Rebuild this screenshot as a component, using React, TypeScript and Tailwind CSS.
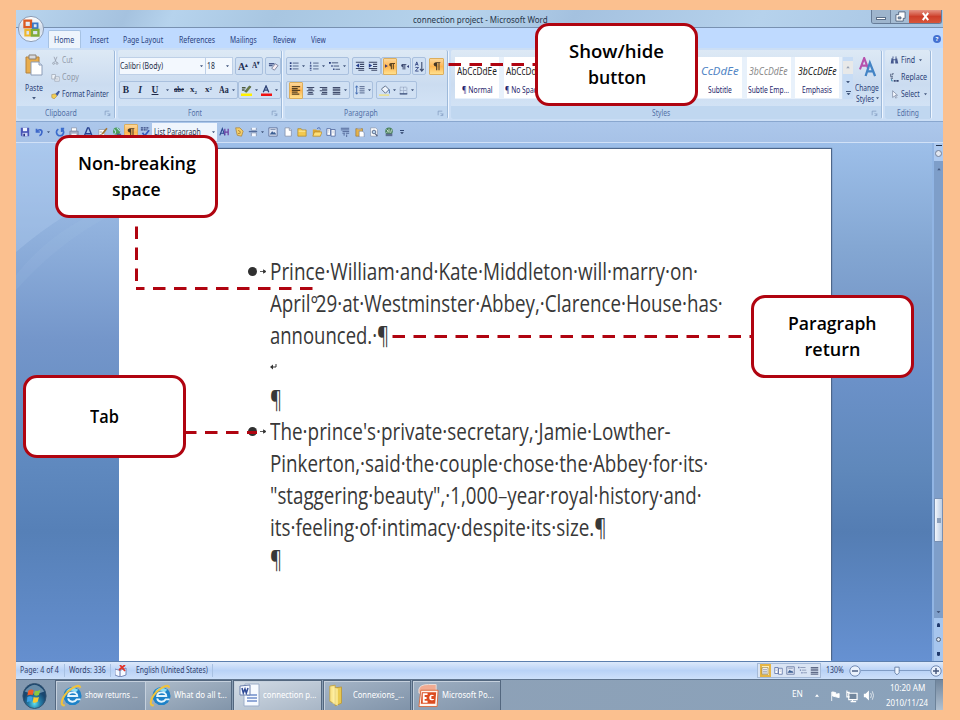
import React, { useLayoutEffect, useRef, useState } from 'react';

/* Text squeezed horizontally to an exact measure, like a condensed UI face. */
function Fit({ w, className = '', children }: { w: number; className?: string; children: React.ReactNode }) {
  const ref = useRef<HTMLSpanElement>(null);
  const [scale, setScale] = useState(1);
  useLayoutEffect(() => {
    if (ref.current) setScale(w / ref.current.offsetWidth);
  }, [w]);
  return (
    <span className={'inline-flex shrink-0 whitespace-pre ' + className} style={{ width: w }}>
      <span ref={ref} className="inline-block shrink-0 origin-left" style={{ transform: `scaleX(${scale})` }}>
        {children}
      </span>
    </span>
  );
}

const S = '#3d4f78';

const glyphs: Record<string, React.ReactNode> = {
  save: (<><path d="M1 1h10v10H2L1 10z" fill="#4a55b8" /><path d="M3.500 1h5v4h-5z" fill="#eef2ff" /><path d="M3 7h6v4H3z" fill="#cdd5f4" /><path d="M4 8h2v3H4z" fill="#2c3580" /></>),
  undo: (<path d="M3 2v4h4M3.500 5.500C6 2 10 3 9.500 6.500 9.300 8.500 8 10 6.500 10.500" fill="none" stroke="#3d67c9" strokeWidth="2" />),
  redo: (<path d="M4 2.500C0 5 2 10.500 6 10.500s6-5 2.500-8M8 6V2h3" fill="none" stroke="#3b6ccc" strokeWidth="2" />),
  print: (<><path d="M3 1h6v4H3z" fill="#fff" stroke="#7d8598" strokeWidth=".7" /><path d="M1 5h10v5H1z" fill="#a6afc4" stroke="#69758f" strokeWidth=".7" /><path d="M3 8h6v3H3z" fill="#f4f6fa" /></>),
  styleA: (<path d="M1.500 11L5.500 1h1.500l4 10M3.500 8h5.500" fill="none" stroke="#27408f" strokeWidth="1.700" />),
  edit: (<><path d="M1 3h7v8H1z" fill="#fff" stroke="#7e8799" strokeWidth=".7" /><path d="M4 8L10 1l1.500 1L6 9z" fill="#a4742f" /><path d="M2 6h3M2 9h3" stroke="#777" strokeWidth=".8" /></>),
  globe: (<><circle cx="5.500" cy="5" r="4.300" fill="#4c9c5c" /><path d="M2 3c3 1 3 4 1 5M6 1c1 2 3 2 3 4" stroke="#b7def0" fill="none" strokeWidth="1.300" /><path d="M6 8h5v3H6z" fill="#505b9a" /></>),
  spell: (<><path d="M1 1h10M1 3.500h8" stroke="#34457f" strokeWidth="1.500" strokeDasharray="2.500 .8" /><path d="M3 7l2.500 3.500L11 4" fill="none" stroke="#3658b9" strokeWidth="2" /></>),
  pilcrow: (<path d="M10 1.500H5C1 1.500 1 6.500 5 6.500V11h1.300V2.500h1.500V11H9V2.500h1z" fill="#463624" />),
  aa: (<><path d="M1 10L4 2l3 8M2 7.500h4" fill="none" stroke="#28448f" strokeWidth="1.300" /><path d="M7 2v8M11 2v8M7 6h4" stroke="#6c3fa2" strokeWidth="1.500" /></>),
  scroll: (<><path d="M2 1h5l4 4-2 6-5-1-1-4z" fill="#f4cf6b" stroke="#a47a2e" strokeWidth=".8" /><path d="M5 4l3 2M5 8l3-1" stroke="#9a6e29" /></>),
  rows: (<><path d="M1 5.500h10" stroke="#536c9c" strokeWidth="1.500" /><path d="M4 1v3h6V1M4 11V7h6v4" fill="#f4f8ff" stroke="#8292b0" /></>),
  pic: (<><path d="M1 1h10v10H1z" fill="#dfe6f4" stroke="#5c6f99" /><path d="M2 9l3-4 2 2 1-1 2 3z" fill="#3c5f93" /><path d="M3 3h6" stroke="#7688aa" /></>),
  page: (<><path d="M2.500 1h5L10 3.500V11H2.500z" fill="#fff" stroke="#75829b" strokeWidth=".8" /><path d="M7.500 1v3H10" fill="#d5ddeb" stroke="#75829b" strokeWidth=".8" /></>),
  folder: (<><path d="M1 2h4l1 1.500h5V11H1z" fill="#f2c94f" stroke="#ab8327" strokeWidth=".8" /><path d="M2 5h8" stroke="#fff1b0" /></>),
  open: (<><path d="M1 3h4l1 1h4v7H1z" fill="#dca632" /><path d="M3 6h9l-2 5H1z" fill="#ffdf76" stroke="#a87c22" strokeWidth=".7" /><path d="M6 2c2-2 4-1 4 1" fill="none" stroke="#405fa8" /></>),
  book: (<><path d="M1 2h4.500v8H1zM6 3h5v8H6z" fill="#fff" stroke="#536aa0" /><path d="M2 4h2M2 6h2M7.500 5h2M7.500 7h2" stroke="#9ba8c5" strokeWidth=".7" /></>),
  toc: (<path d="M1 1.500h10M1 3.500h10M3 5.500h8M3 7.500h3M7 7.500h4M4 9.500h2M8 9v3" stroke="#45598b" strokeWidth="1" />),
  layout: (<><path d="M1.500 1h9v10h-9z" fill="#fff" stroke="#8a7440" /><path d="M3 4h6M3 6.500h6M3 9h6" stroke="#6f7690" /></>),
  paste: (<><path d="M1 2h8v9H1z" fill="#e5b249" stroke="#93702e" strokeWidth=".7" /><path d="M3 1h4v2H3z" fill="#a2aac0" /><path d="M5 5h4l2 2v5H5z" fill="#fff" stroke="#63769d" strokeWidth=".7" /></>),
  preview: (<><path d="M2 1h6l2 2v8H2z" fill="#fff" stroke="#75829b" strokeWidth=".7" /><circle cx="6" cy="6" r="2.200" fill="#b9d4ee" stroke="#4a5b7d" /><path d="M7.500 8L10 11" stroke="#4a5b7d" strokeWidth="1.400" /></>),
  find: (<><path d="M2 3h2.500l.5 7H1zM7 3h2.500L11 10H7z" fill="#46598f" /><path d="M4 5h4M3 1.500h2M7 1.500h2" stroke="#46598f" strokeWidth="1.300" /></>),
  green: (<><circle cx="6" cy="5" r="4.500" fill="#4a815c" /><path d="M3 3l2 2-2 2M6 2v5M9 3L8 7" stroke="#e2f1e3" fill="none" /><path d="M2 8h8v3H2z" fill="#5e6e92" /></>),
  bullets: (<><path d="M4.500 2.500h7M4.500 6h7M4.500 9.500h7" stroke={S} strokeWidth="1" /><path d="M1 2.500h2M1 6h2M1 9.500h2" stroke="#26397a" strokeWidth="2" /></>),
  numbers: (<><path d="M5 2.500h6.500M5 6h6.500M5 9.500h6.500" stroke={S} strokeWidth="1" /><path d="M2 1v3M1 5.500h2M1 7h2M1 9h2M1 11h2" stroke="#26397a" /></>),
  multi: (<><path d="M3 2h7M5 5.500h6M7 9h5" stroke={S} strokeWidth="1" /><path d="M0 2h2M2.500 5.500h1.500M4.500 9H6" stroke="#26397a" strokeWidth="1.800" /></>),
  outdent: (<><path d="M1 1.500h10M6 4h5M6 6.500h5M1 9h10M4 11h7" stroke="#3b4665" strokeWidth="1.300" /><path d="M5 3v5L1 5.500z" fill="#273f8e" /></>),
  indent: (<><path d="M1 1.500h10M6 4h5M6 6.500h5M1 9h10M4 11h7" stroke="#3b4665" strokeWidth="1.300" /><path d="M1 3v5l4-2.500z" fill="#273f8e" /></>),
  ltr: (<><path d="M0 4v4l3.500-2z" fill="#473e72" /><path d="M12 2.500H7C4.500 2.500 4.500 6.500 7 6.500V10h1.300V3.500h1V10h1.300V3.500H12z" fill="#5c4420" /></>),
  rtl: (<><path d="M12 4v4L9 6z" fill="#333f78" /><path d="M8.500 2.500H3.500C1 2.500 1 6.500 3.500 6.500V10h1.300V3.500h1V10h1.300V3.500h1.400z" fill="#39466e" /></>),
  sort: (<><path d="M1.500 5L3 1l1.500 4M2 3.800h2M1.500 7H5l-3.500 4H5" fill="none" stroke="#344683" strokeWidth="1" /><path d="M8.500 1v9M6.500 8.500l2 2.500 2-2.500" fill="none" stroke="#3f4e72" strokeWidth="1.200" /></>),
  left: (<path d="M1 2h10M1 4.200h7M1 6.400h10M1 8.600h7M1 10.800h9" stroke="#574121" strokeWidth="1.500" />),
  center: (<path d="M1 2h10M3 4.200h6M1 6.400h10M3 8.600h6M2 10.800h8" stroke="#414c6c" strokeWidth="1.500" />),
  right: (<path d="M1 2h10M4 4.200h7M1 6.400h10M4 8.600h7M3 10.800h8" stroke="#414c6c" strokeWidth="1.500" />),
  just: (<path d="M1 2h10M1 4.200h10M1 6.400h10M1 8.600h10M1 10.800h10" stroke="#414c6c" strokeWidth="1.500" />),
  spacing: (<><path d="M5.500 2h6M5.500 4.500h6M5.500 7h6M5.500 9.500h6" stroke={S} /><path d="M2 1v10M.5 3L2 1l1.500 2M.5 9L2 11l1.500-2" fill="none" stroke="#3761ac" /></>),
  fill: (<><path d="M3 4l4-3 4 4-4 4-4-4z" fill="#edf3fb" stroke="#5c6b85" /><path d="M10 5c2 1 2 3 1 4" stroke="#5985ba" fill="none" strokeWidth="1.300" /><path d="M0 10h11v2H0z" fill="#e8e19a" /></>),
  borders: (<><path d="M1.500 1.500h9v9h-9zM6 1.500v9M1.500 6h9" fill="none" stroke="#8392b0" strokeDasharray="1 .7" /><path d="M1 10.500h10" stroke="#384c79" strokeWidth="1.400" /></>),
  eraser: (<><path d="M1 3h6M1 5h4" stroke="#4b5b8c" strokeWidth="1.500" /><path d="M4 8l4-5 3 2-4 5z" fill="#f7eef4" stroke="#616b8b" strokeWidth=".8" /></>),
  hilite: (<><path d="M1 3h4M1 5.500h3" stroke="#4c5940" strokeWidth="1.500" /><path d="M4 7l5-6 2 1-5 6z" fill="#6a7d3c" stroke="#42502c" strokeWidth=".6" /><path d="M0 9.300h12V12H0z" fill="#fff000" /></>),
  fontA: (<><path d="M2.500 8L5.500 1 8.500 8M3.500 5.500h4" fill="none" stroke="#2e4276" strokeWidth="1.400" /><path d="M0 9.300h12V12H0z" fill="#f01212" /></>),
  cut: (<path d="M4 1l3 7M8 1L5 8M3.500 8.500a1.300 1.300 0 100 2.600 1.300 1.300 0 000-2.600M8 8.500a1.300 1.300 0 100 2.600A1.300 1.300 0 008 8.500" fill="none" stroke="#969fae" strokeWidth="1.100" />),
  copy: (<><path d="M1 2h5v6H1zM5 5h6v6H5z" fill="#edf2f8" stroke="#a0a9b7" /><path d="M6.500 7.500h3M6.500 9h3" stroke="#b5becb" strokeWidth=".8" /></>),
  brush: (<><path d="M1 6l5-1 2 3-4 4-3-2z" fill="#f1cd54" stroke="#9a752a" strokeWidth=".6" /><path d="M6 5l4-4 2 1-3.500 6z" fill="#3e589f" /></>),
  replace: (<><path d="M1 1v4h3M5 1H3v2M1 7h3" fill="none" stroke="#52627f" strokeWidth="1.300" /><path d="M5 10.500h7" stroke="#34436e" strokeWidth="2.500" strokeDasharray="1.600 .5" /><path d="M2 8v2.500h2" fill="none" stroke="#2e7ca4" /></>),
  select: (<path d="M3.500 1v9L6 8l2 3 1-1-2-3h3z" fill="#f7faff" stroke="#65728e" strokeWidth=".8" />),
  launch: (<path d="M2 2h7M2 2v7M6 5l4 4V5.500M10 9.500H6" fill="none" stroke="#7791b8" strokeWidth="1.100" />),
  proof: (<><path d="M0 4l5 1.500L11 3v7l-6 2-5-2z" fill="#f6f9ff" stroke="#5e74aa" strokeWidth=".8" /><path d="M5 5.500V12" stroke="#5e74aa" /><path d="M5 0l5 6M10 0L4 5" stroke="#e23329" strokeWidth="1.800" /></>),
};

const Ico = ({ n, className = 'size-[11px]' }: { n: string; className?: string }) => (
  <svg viewBox="0 0 12 12" className={'shrink-0 ' + className}>{glyphs[n]}</svg>
);
const Down = ({ className = 'w-[4px]' }: { className?: string }) => (
  <svg viewBox="0 0 6 4" className={'h-[2.5px] shrink-0 ' + className}><path d="M0 0h6L3 4z" fill="#44597f" /></svg>
);
const Box = ({ className, children }: { className: string; children: React.ReactNode }) => (
  <div className={'flex h-[18px] shrink-0 items-center justify-around rounded-[2px] border border-[#a9c0de] bg-[#d0e0f3] ' + className}>{children}</div>
);
const Hot = ({ n, className = 'w-[14px]' }: { n: string; className?: string }) => (
  <span className={'flex h-[17px] shrink-0 items-center justify-center rounded-[1px] border border-[#dcae5c] bg-gradient-to-b from-[#fcd799] via-[#ffb54f] to-[#ffe08d] ' + className}>
    <Ico n={n} className="size-[10px]" />
  </span>
);

function Group({ title, w, className, launch = true, children }: { title: string; w: number; className: string; launch?: boolean; children: React.ReactNode }) {
  return (
    <section className={'flex h-[69px] shrink-0 flex-col overflow-hidden rounded-[2px] border-r border-[#9db9da] bg-gradient-to-b from-[#dde9f5] via-[#cbdcf0] to-[#d6e6f8] shadow-[1px_0_0_#eff6ff] ' + className}>
      <div className="h-[56px] shrink-0">{children}</div>
      <div className="flex h-[13px] items-center bg-[#c0d7f0] pt-[2px] text-[8.500px] leading-none text-[#5270a6]">
        <div className="flex flex-1 justify-center"><Fit w={w}>{title}</Fit></div>
        {launch && <Ico n="launch" className="mr-[3px] size-[7px]" />}
      </div>
    </section>
  );
}

function StyleCard({ sample, name, nameW, className = '', sampleW = 40 }: { sample: string; name: string; nameW: number; className?: string; sampleW?: number }) {
  return (
    <div className="flex h-[41px] w-[44px] shrink-0 flex-col items-center overflow-hidden bg-white">
      <Fit w={sampleW} className={'mt-[7px] h-[15px] text-[10.500px] leading-[15px] ' + className}>{sample}</Fit>
      <Fit w={nameW} className="mt-[5px] text-[8px] leading-[11px] text-[#24246a]">{name}</Fit>
    </div>
  );
}

function Ribbon() {
  return (
    <div className="flex h-[74px] shrink-0 gap-[3px] border-b border-[#89a7cf] bg-[#cbdef5] px-[1px] pt-[2px] text-[8.500px] text-[#2b3f78]">
      <Group title="Clipboard" w={32} className="w-[98px]">
        <div className="flex h-full pl-[8px] pt-[2px]">
          <div className="flex w-[18px] flex-col items-center">
            <svg viewBox="0 0 18 22" className="mt-[2px] h-[22px] w-[18px]">
              <path d="M1 3h13v16H1z" fill="#e8ad4d" stroke="#b5823c" /><path d="M4 1h7v4H4z" fill="#d8dbe0" stroke="#8b8172" />
              <path d="M6 8h8l3 3v10H6z" fill="#fff" stroke="#8c9db8" /><path d="M14 8v3h3" fill="#d6e4f2" stroke="#8c9db8" />
            </svg>
            <Fit w={18} className="mt-[6px] leading-[12px]">Paste</Fit>
            <Down className="mt-[3px] w-[4px]" />
          </div>
          <div className="ml-[8px] flex flex-col text-[#929aa8]">
            <div className="flex h-[16px] items-center gap-[2px]"><Ico n="cut" className="size-[9px]" /><Fit w={11}>Cut</Fit></div>
            <div className="flex h-[18px] items-center gap-[2px]"><Ico n="copy" className="size-[9px]" /><Fit w={17}>Copy</Fit></div>
            <div className="flex h-[17px] items-center gap-[2px] text-[#2b3f78]"><Ico n="brush" className="size-[9px]" /><Fit w={47}>Format Painter</Fit></div>
          </div>
        </div>
      </Group>

      <Group title="Font" w={14} className="w-[164px]">
        <div className="flex flex-col gap-[6px] pl-[1px] pt-[7px]">
          <div className="flex items-center">
            <div className="flex h-[18px] w-[87px] items-center justify-between border border-[#bed0e7] bg-[#f3f8fe] pr-[2px] text-[#222c46]"><Fit w={43}>Calibri (Body)</Fit><Down className="w-[3px]" /></div>
            <div className="flex h-[18px] w-[27px] items-center justify-between border border-l-0 border-[#bed0e7] bg-[#f3f8fe] pl-[1px] pr-[3px] text-[#222c46]"><Fit w={8}>18</Fit><Down className="w-[3px]" /></div>
            <Box className="ml-[2px] w-[28px] font-['Liberation_Serif'] font-bold text-[#263154]"><Fit w={10} className="text-[11px]">A<sup className="text-[6px]">▴</sup></Fit><Fit w={8} className="text-[9px]">A<sup className="text-[6px]">▾</sup></Fit></Box>
            <Box className="ml-[2px] w-[16px]"><Ico n="eraser" /></Box>
          </div>
          <div className="flex items-center">
            <div className="flex h-[18px] w-[119px] shrink-0 items-center rounded-[2px] border border-[#a9c0de] bg-[#d0e0f3] text-center font-['Liberation_Serif'] text-[9.500px] font-bold text-[#202a49]">
              <span className="w-[12px]">B</span><span className="w-[16px] italic">I</span><span className="w-[14px] underline">U</span>
              <span className="flex w-[10px] justify-center"><Down className="w-[3px]" /></span>
              <Fit w={10} className="ml-[2px] text-[8px] line-through">abc</Fit>
              <Fit w={7} className="ml-[6px] text-[9px]">x<sub className="text-[5px]">2</sub></Fit>
              <Fit w={7} className="ml-[8px] text-[9px]">x<sup className="text-[5px]">2</sup></Fit>
              <Fit w={10} className="ml-[7px]">Aa</Fit><Down className="ml-[3px] w-[3px]" />
            </div>
            <Box className="w-[43px]"><Ico n="hilite" /><Down className="w-[3px]" /><Ico n="fontA" /><Down className="w-[3px]" /></Box>
          </div>
        </div>
      </Group>

      <Group title="Paragraph" w={34} className="w-[163px]">
        <div className="flex flex-col gap-[6px] pl-[1px] pt-[7px]">
          <div className="flex items-center">
            <Box className="w-[63px]"><Ico n="bullets" className="size-[10px]" /><Down className="w-[3px]" /><Ico n="numbers" className="size-[10px]" /><Down className="w-[3px]" /><Ico n="multi" className="size-[11px]" /><Down className="w-[3px]" /></Box>
            <Box className="ml-[3px] w-[29px]"><Ico n="outdent" className="size-[10px]" /><Ico n="indent" className="size-[10px]" /></Box>
            <Box className="w-[30px]"><Hot n="ltr" /><Ico n="rtl" className="size-[9px]" /></Box>
            <Box className="ml-[1px] w-[14px]"><Ico n="sort" /></Box>
            <Hot n="pilcrow" className="ml-[3px] w-[15px]" />
          </div>
          <div className="flex items-center">
            <Box className="w-[64px]"><Hot n="left" className="w-[14px]" /><Ico n="center" className="size-[9px]" /><Ico n="right" className="size-[9px]" /><Ico n="just" className="size-[9px]" /><Down className="w-[3px]" /></Box>
            <Box className="ml-[3px] w-[20px]"><Ico n="spacing" className="size-[10px]" /><Down className="w-[3px]" /></Box>
            <Box className="ml-[3px] w-[41px]"><Ico n="fill" /><Down className="w-[3px]" /><Ico n="borders" className="size-[9px]" /><Down className="w-[3px]" /></Box>
          </div>
        </div>
      </Group>

      <Group title="Styles" w={18} className="w-[431px]">
        <div className="flex pl-[4px] pt-[7px]">
          <div className="flex h-[42px] w-[387px] gap-[4.600px] overflow-hidden bg-[#e8f1fb]">
            <StyleCard sample="AbCcDdEe" name="¶ Normal" nameW={31} className="text-[#222]" />
            <StyleCard sample="AbCcDdEe" name="¶ No Spacing" nameW={42} className="text-[#222]" />
            <div className="w-[141.200px] shrink-0 bg-white" />
            <StyleCard sample="CcDdEe" name="Subtitle" nameW={24} className="font-['Noto_Sans'] text-[#5285c5] italic" sampleW={38} />
            <StyleCard sample="3bCcDdEe" name="Subtle Emp..." nameW={41} className="text-[#8b8b8b] italic" sampleW={39} />
            <StyleCard sample="3bCcDdEe" name="Emphasis" nameW={30} className="text-[#222] italic" sampleW={39} />
          </div>
          <div className="ml-[1px] flex h-[42px] w-[10px] flex-col items-center justify-around bg-[#c7dcf5]">
            <div className="flex h-[13px] w-full items-center justify-center bg-[#e8e9e9]"><Down className="w-[4px] rotate-180 opacity-50" /></div>
            <Down /><span className="flex flex-col items-center gap-px"><span className="h-px w-[5px] bg-[#44597f]" /><Down className="w-[5px]" /></span>
          </div>
          <div className="ml-[1px] flex w-[26px] flex-col items-center">
            <svg viewBox="0 0 18 22" className="h-[21px] w-[17px]"><path d="M1 13L5.500 1 10 13M3 9h5" fill="none" stroke="#b652ad" strokeWidth="2.200" /><path d="M7 20l4.500-14L17 20M9 15h6" fill="none" stroke="#4384c5" strokeWidth="2.400" /></svg>
            <Fit w={24} className="mt-[4px] leading-[11px]">Change</Fit>
            <span className="flex items-center gap-[2px]"><Fit w={18} className="leading-[11px]">Styles</Fit><Down className="w-[3px]" /></span>
          </div>
        </div>
      </Group>

      <Group title="Editing" w={22} className="w-[46px]" launch={false}>
        <div className="flex flex-col pl-[5px] pt-[2px]">
          <div className="flex h-[17px] items-center gap-[2px]"><Ico n="find" className="size-[9px]" /><Fit w={14}>Find</Fit><Down className="ml-[2px] w-[3px]" /></div>
          <div className="flex h-[17px] items-center gap-[2px]"><Ico n="replace" className="size-[9px]" /><Fit w={26}>Replace</Fit></div>
          <div className="flex h-[17px] items-center gap-[2px]"><Ico n="select" className="size-[9px]" /><Fit w={19}>Select</Fit><Down className="ml-[2px] w-[3px]" /></div>
        </div>
      </Group>
    </div>
  );
}

const Q = ({ n, className = 'w-[14.400px]' }: { n: string; className?: string }) => (
  <span className={'flex shrink-0 justify-center ' + className}><Ico n={n} className="size-[10px]" /></span>
);

function QuickBar() {
  return (
    <div className="flex h-[21px] shrink-0 items-center border-b border-[#d1e1f7] bg-gradient-to-b from-[#acc7eb] to-[#a7c2e7] pl-[2px]">
      <Q n="save" /><Q n="undo" className="w-[13px]" /><span className="flex w-[7px] justify-center"><Down className="w-[3px]" /></span>
      <Q n="redo" /><Q n="print" /><Q n="styleA" /><Q n="edit" /><Q n="globe" className="w-[14px]" />
      <Hot n="pilcrow" className="w-[14px]" /><Q n="spell" className="w-[14px]" />
      <div className="flex h-[18px] w-[65px] items-center justify-between bg-[#eff5fd] pl-[2px] pr-[2px] text-[8.500px] text-[#29334d]"><Fit w={47}>List Paragraph</Fit><Down className="w-[3px]" /></div>
      <Q n="aa" /><Q n="scroll" /><Q n="rows" className="w-[15px]" /><span className="flex w-[4px]"><Down className="w-[3px]" /></span>
      <Q n="pic" className="w-[16px]" /><Q n="page" /><Q n="folder" /><Q n="open" /><Q n="book" /><Q n="toc" /><Q n="paste" /><Q n="preview" /><Q n="green" />
      <span className="ml-[4px] flex flex-col items-center gap-px"><span className="h-px w-[4px] bg-[#334a76]" /><Down /></span>
    </div>
  );
}

function Line({ w, children }: { w: number; children: React.ReactNode }) {
  return <div className="flex h-[32px] items-center"><Fit w={w} className="leading-[32px]">{children}</Fit></div>;
}
function Bullet() {
  return (
    <span className="-ml-[22px] flex w-[22px] shrink-0 items-center">
      <span className="h-[9px] w-[9px] rounded-full bg-[#303030]" />
      <svg viewBox="0 0 6 5" className="ml-[3px] h-[5px] w-[6px]"><path d="M0 2.500h4M3.500.8L6 2.500 3.500 4.200z" stroke="#333" strokeWidth=".8" fill="#333" /></svg>
    </span>
  );
}

function Document() {
  return (
    <div className="flex h-[518px] shrink-0 bg-[#9cbee9]">
      <div className="relative w-[103px] shrink-0 overflow-hidden bg-[linear-gradient(to_bottom,#a6c5ec_0%,#8fb0dc_18%,#7496ca_38%,#5f89bf_62%,#5680b7_75%,#658fcf_100%)]">
        <svg viewBox="0 0 103 518" className="size-full">
          <path d="M0 0h103v46Q50 66 0 109z" fill="#b5d0f1" opacity=".3" />
          <path d="M0 132Q40 82 103 60v8Q45 96 0 147z" fill="#b9d3f2" opacity=".08" />
        </svg>
      </div>
      <main className="relative mt-[6px] w-[712px] shrink-0 bg-white pl-[151px] pt-[106px] font-['Open_Sans'] text-[23px] text-[#383838] shadow-[1px_-1px_1px_#4d668a]">
        <div className="flex items-center"><Bullet /><Line w={428}>Prince·William·and·Kate·Middleton·will·marry·on·</Line></div>
        <Line w={453}>April<span className="-mr-[3px] text-[22px]">°</span>29·at·Westminster·Abbey,·Clarence·House·has·</Line>
        <Line w={119}>announced.·¶</Line>
        <div className="flex h-[32px] items-center"><svg viewBox="0 0 7 6" className="h-[6px] w-[7px]"><path d="M6 0v3H2" fill="none" stroke="#333" /><path d="M3 .5v5L0 3z" fill="#333" /></svg></div>
        <Line w={12}>¶</Line>
        <div className="flex items-center"><Bullet /><Line w={401}>The·prince's·private·secretary,·Jamie·Lowther-</Line></div>
        <Line w={438}>Pinkerton,·said·the·couple·chose·the·Abbey·for·its·</Line>
        <Line w={432}>"staggering·beauty",·1,000<span className="font-light">–</span>year·royal·history·and·</Line>
        <Line w={337}>its·feeling·of·intimacy·despite·its·size.¶</Line>
        <Line w={12}>¶</Line>
      </main>
      <div className="h-full flex-1 bg-[linear-gradient(to_bottom,#9dbfe9_0%,#84a7d3_20%,#799bca_31%,#6b91c8_46%,#5f88bb_63%,#547db3_75%,#6691d2_100%)]" />
      <div className="flex w-[11px] shrink-0 flex-col items-center border-l-2 border-[#91b5e4] bg-[#7e9ec9]">
        <div className="flex h-[18px] w-full shrink-0 flex-col items-center bg-[#aecaf0] pt-[2px]"><span className="h-px w-[6px] bg-[#26354f]" /><span className="mt-[4px] size-[7px] rounded-full border border-[#75819a] bg-[#e2e7f0]" /></div>
        <div className="flex h-[16px] items-center"><Down className="w-[6px] rotate-180" /></div>
        <div className="flex-1" />
        <div className="flex h-[44px] w-full items-center justify-center rounded-[1px] border border-[#7890b3] bg-gradient-to-r from-[#f1f5fb] to-[#bccde4]"><span className="h-[5px] w-[4px] bg-[#8ca0bc]" /></div>
        <div className="h-[64px]" />
        <div className="flex h-[12px] items-center"><Down className="w-[5px]" /></div>
        <div className="flex h-[43px] w-full shrink-0 flex-col items-center justify-around bg-[#a7c6ee]"><span className="h-[4px] w-[3px] rounded-t bg-[#203a6d]" /><span className="size-[5px] rounded-full border border-[#516078] bg-[#dce4ee]" /><span className="h-[4px] w-[3px] rounded-b bg-[#203a6d]" /></div>
      </div>
    </div>
  );
}

const Zoomer = ({ d }: { d: string }) => (
  <svg viewBox="0 0 12 12" className="size-[12px]"><circle cx="6" cy="6" r="5.200" fill="#e9f1fc" stroke="#6680ab" strokeWidth=".9" /><path d={d} stroke="#43557b" strokeWidth="1.400" /></svg>
);

function StatusBar() {
  return (
    <div className="flex h-[18px] shrink-0 items-center border-t border-[#5c7fae] bg-gradient-to-b from-[#dce9fb] via-[#b9d2f6] to-[#cde0fa] pl-[4px] text-[8.500px] text-[#30406c]">
      <Fit w={39}>Page: 4 of 4</Fit><span className="mx-[4.500px] h-[13px] w-px bg-[#a8c1e2]" />
      <Fit w={37}>Words: 336</Fit><span className="mx-[4px] h-[13px] w-px bg-[#a8c1e2]" />
      <Ico n="proof" className="size-[12px]" /><Fit w={72} className="ml-[9px]">English (United States)</Fit>
      <span className="ml-[4px] h-[13px] w-px bg-[#a8c1e2]" />
      <div className="flex-1" />
      <div className="mr-px flex h-[15px] w-[64px] items-center justify-around border border-[#a5bad8] bg-[#d9e4f4]">
        <span className="flex h-[13px] w-[11px] items-center justify-center border-2 border-[#e5b545] bg-[#fff0b9]"><Ico n="layout" className="size-[8px]" /></span>
        <Ico n="book" className="size-[9px]" /><Ico n="pic" className="size-[9px]" /><Ico n="multi" className="size-[9px] opacity-60" /><Ico n="just" className="size-[9px] opacity-80" />
      </div>
      <Fit w={18} className="ml-[4px]">130%</Fit>
      <span className="ml-[5px] flex"><Zoomer d="M3 6h6" /></span>
      <div className="flex w-[69px] items-center justify-center bg-[linear-gradient(#809cc5,#809cc5)] bg-[length:100%_1px] bg-center bg-no-repeat">
        <svg viewBox="0 0 7 10" className="ml-[3px] h-[10px] w-[6px]"><path d="M1 .5h5V7L3.500 9.500 1 7z" fill="#eef5ff" stroke="#5f799f" /></svg>
      </div>
      <Zoomer d="M3 6h6M6 3v6" />
      <span className="w-[1px]" />
    </div>
  );
}

const IE = () => (
  <svg viewBox="0 0 24 24" className="size-[23px]">
    <circle cx="13" cy="12.500" r="9.500" fill="#1d82c8" /><path d="M6 8Q11 1 19 6l-3 3Q11 5 6 8z" fill="#8bdcf3" />
    <path d="M8.500 12.500h9.500c-.2-5-9-5-9.500 0zM8.500 15c1 4.500 7 4.500 9 1h4" fill="none" stroke="#e5f5fd" strokeWidth="2" />
    <path d="M21 4C21 0 14 2 8 8 1 15 0 24 5 22" fill="none" stroke="#efc23e" strokeWidth="2.200" />
  </svg>
);
const Task = ({ className, label, w, icon }: { className: string; label: string; w: number; icon: React.ReactNode }) => (
  <div className={'flex h-[31px] shrink-0 items-center gap-[2px] overflow-hidden border border-[#53677f] pl-[4px] shadow-[inset_1px_1px_0_#c5d0dd] ' + className}>
    <span className="flex w-[23px] shrink-0 justify-center">{icon}</span><Fit w={w}>{label}</Fit>
  </div>
);

function Taskbar() {
  return (
    <footer className="flex h-[32px] shrink-0 items-center border-t border-[#61758e] bg-gradient-to-r from-[#8298b0] via-[#8da1b7] to-[#8aa2bb] text-[9.500px] text-white">
      <div className="flex w-[39px] shrink-0 items-center pl-[6px]">
        <svg viewBox="0 0 28 30" className="h-[28px] w-[25px]">
          <defs><radialGradient id="orb" cx=".5" cy=".8"><stop offset="0" stopColor="#60e0ef" /><stop offset=".5" stopColor="#247da8" /><stop offset="1" stopColor="#19466f" /></radialGradient></defs>
          <ellipse cx="14" cy="15" rx="13" ry="14" fill="url(#orb)" stroke="#304f6c" />
          <path d="M3 10Q14-5 25 10 14 15 3 10z" fill="#c5e0ec" opacity=".45" />
          <path d="M7 9q3-2 6-.5L12 14q-3-1-6 .5z" fill="#f05a28" /><path d="M14.500 9q3 1 6-1l-1.500 6q-3 1.500-5.500 0z" fill="#8cc83c" />
          <path d="M6 16q3-1.500 6 0l-1.500 5.500q-3-1-5 .5z" fill="#3ca0e6" /><path d="M13 16q3 1.500 6 0l-1.500 5.500q-3 2-5.500.500z" fill="#fbc92d" />
        </svg>
      </div>
      <Task className="w-[90px] border-r-0 bg-gradient-to-br from-[#9caec1] to-[#8396ac]" label="show returns ..." w={53} icon={<IE />} />
      <Task className="w-[87px] border-l-0 bg-gradient-to-br from-[#aebccb] to-[#8295aa]" label="What do all t..." w={53} icon={<IE />} />
      <Task className="ml-[1px] w-[89px] bg-gradient-to-br from-[#d3dce6] to-[#a8b6c6]" label="connection p..." w={53} icon={
        <svg viewBox="0 0 22 25" className="h-[25px] w-[22px]"><path d="M6 1h14v22H5V5z" fill="#f7faff" stroke="#9daec9" /><path d="M8 12h10M8 15h10M8 18h10" stroke="#718fcb" strokeWidth="1.500" /><path d="M1 3l10-1v10H1z" fill="#f5f8ff" stroke="#6e82ad" /><path d="M3 5l1.300 5L6 6l1.300 4L9 5" fill="none" stroke="#304b96" strokeWidth="1.500" /></svg>} />
      <Task className="ml-[1px] w-[88px] bg-gradient-to-br from-[#a6b6c8] to-[#8093a9]" label="Connexions_..." w={51} icon={
        <svg viewBox="0 0 20 25" className="mr-[5px] h-[25px] w-[18px]"><path d="M2 2l6-1v21l-6-3z" fill="#fae58b" stroke="#c1a346" /><path d="M8 4l7-1v18l-7 3z" fill="#e9c94f" stroke="#bb9a3d" /><path d="M5 3l6 2v19l-6-3z" fill="#fff2a9" opacity=".7" /></svg>} />
      <Task className="ml-[1px] w-[89px] bg-gradient-to-br from-[#9eafc2] to-[#8194aa]" label="Microsoft Po..." w={52} icon={
        <svg viewBox="0 0 24 26" className="h-[26px] w-[23px]"><path d="M2 6Q3 1 12 1h8v9H2z" fill="#f1ab92" stroke="#e9ddd8" /><path d="M4 7h18l-1 17H2z" fill="#fff6ef" stroke="#d86c40" /><path d="M5 9h15l-1 12H4z" fill="#dc4c20" /><path d="M11 11H7v8h4M7 15h3" stroke="#fff" strokeWidth="2" fill="none" /><path d="M18 13c-3-3-6 0-5 3 1 2 4 2 5 0h-3v-3z" fill="#fff" /></svg>} />
      <div className="flex-1" />
      <Fit w={11} className="mb-[4px] text-[9px]">EN</Fit>
      <svg viewBox="0 0 6 4" className="ml-[12px] h-[3px] w-[4px]"><path d="M0 4h6L3 0z" fill="#fff" /></svg>
      <svg viewBox="0 0 12 14" className="ml-[11px] h-[12px] w-[10px]"><path d="M2 2v11M3 2l4 1v2l4-1v5L7 8 3 7z" fill="#fff" stroke="#fff" /></svg>
      <svg viewBox="0 0 13 14" className="ml-[6px] h-[14px] w-[12px]"><path d="M3 4h9v7H3zM1 1v7h3M1 3h3M7 11v2M5 13h6" fill="#72879e" stroke="#fff" strokeWidth="1.300" /></svg>
      <svg viewBox="0 0 13 14" className="ml-[5px] h-[13px] w-[11px]"><path d="M1 5h2l4-4v12L3 9H1z" fill="#fff" /><path d="M9 4q2 3 0 6M11 2q3 5 0 10" fill="none" stroke="#fff" strokeWidth=".8" /></svg>
      <div className="ml-[11px] mr-px flex w-[44px] flex-col items-center gap-[3px] text-[9px] leading-[12px]"><Fit w={35}>10:20 AM</Fit><Fit w={42}>2010/11/24</Fit></div>
      <div className="ml-[5px] h-full w-[8px] border-l border-[#6c8299] bg-gradient-to-b from-[#71869d] to-[#b3c3d3]" />
    </footer>
  );
}

const Callout = ({ className, children }: { className: string; children: React.ReactNode }) => (
  <div className={"absolute flex h-[83px] w-[163px] flex-col items-center justify-center rounded-[14px] border-3 border-[#b00410] bg-white pb-[2px] font-['Open_Sans'] text-[18px] leading-[26px] font-semibold text-black " + className}>{children}</div>
);

export default function App() {
  return (
    <div className="relative h-[720px] w-[960px] overflow-hidden bg-[#fbc08f] pl-[16px] pt-[10px] font-['Noto_Sans',sans-serif]">
      <div className="flex h-[700px] w-[927px] flex-col overflow-hidden">
        <header className="flex h-[18px] shrink-0 items-start border-b border-[#7891b1] bg-[linear-gradient(115deg,#b9d5ee_0%,#a5c2df_12%,#b6d3ed_17%,#a8c6e1_28%,#b7d4ed_48%,#a4c1df_60%,#b6d2ec_80%,#a7c5e3_100%)]">
          <div className="flex flex-1 justify-center pl-[74px] pt-[4px] text-[9.500px] leading-[12px] text-[#28364b]"><Fit w={135}>connection project - Microsoft Word</Fit></div>
          <div className="flex h-[14px] overflow-hidden rounded-b-[3px] border border-t-0 border-[#667c98]">
            <span className="flex w-[19px] items-end justify-center border-r border-[#71859e] bg-[#9eb5cd] pb-[3px]"><span className="h-[3px] w-[10px] border border-[#5b6f88] bg-white" /></span>
            <span className="flex w-[18px] items-center justify-center bg-[#a5bcd3]"><svg viewBox="0 0 12 12" className="size-[11px]"><path d="M4 1h7v7H9v3H1V4h3z" fill="#fff" stroke="#52657e" /><path d="M3.500 6.500h3v2h-3z" fill="#8ea5bf" stroke="#52657e" /></svg></span>
            <span className="flex w-[32px] items-center justify-center bg-gradient-to-b from-[#e49383] via-[#cd3e29] to-[#d7553a]"><svg viewBox="0 0 10 10" className="size-[9px]"><path d="M2 1l6 8M8 1L2 9" stroke="#fff" strokeWidth="2.200" /></svg></span>
          </div>
          <span className="w-[1px]" />
        </header>
        <nav className="flex h-[20px] shrink-0 items-end bg-[#bfdaff] pl-[32px] text-[8.500px] text-[#2b4280]">
          <div className="flex h-[18px] w-[33px] items-center justify-center rounded-t-[2px] border border-b-0 border-[#a6c2e4] bg-[#edf4fc] pr-px pt-px"><Fit w={20}>Home</Fit></div>
          <div className="flex h-[18px] items-center pt-[2px]">
            <Fit w={19} className="ml-[9px]">Insert</Fit><Fit w={40} className="ml-[14px]">Page Layout</Fit><Fit w={36} className="ml-[16px]">References</Fit>
            <Fit w={27} className="ml-[15px]">Mailings</Fit><Fit w={23} className="ml-[16px]">Review</Fit><Fit w={15} className="ml-[15px]">View</Fit>
          </div>
          <div className="mb-[5px] ml-auto mr-[2px] flex size-[8px] items-center justify-center rounded-full bg-[#4471d1] text-[6px] font-bold text-white">?</div>
        </nav>
        <Ribbon />
        <QuickBar />
        <Document />
        <StatusBar />
        <Taskbar />
      </div>

      {/* Office orb, over the title and tab rows */}
      <svg viewBox="0 0 30 32" className="absolute left-[17px] top-[13px] h-[32px] w-[28px]">
        <defs><linearGradient id="office" x2="0" y2="1"><stop stopColor="#fff" /><stop offset=".5" stopColor="#d0dbe9" /><stop offset="1" stopColor="#f5f9ff" /></linearGradient></defs>
        <circle cx="15" cy="16" r="13.500" fill="url(#office)" stroke="#8798b3" />
        <path d="M8 7h7v7H8z" fill="none" stroke="#dc5a22" strokeWidth="2.500" /><path d="M17 10h5v5h-5z" fill="none" stroke="#3978c8" strokeWidth="2" />
        <path d="M9 17h5v6H9z" fill="none" stroke="#eeb72f" strokeWidth="2.300" /><path d="M16 17h7v6h-7z" fill="none" stroke="#80ab38" strokeWidth="2.500" />
      </svg>

      {/* Dashed leaders from the callouts to their marks */}
      <svg viewBox="0 0 960 720" className="absolute left-0 top-0 h-[720px] w-[960px]" fill="none" stroke="#b00410" strokeWidth="3" strokeDasharray="12.500 8.500">
        <path d="M136.500 226.500V287" />
        <path d="M136 288.500H313" strokeDashoffset="4" />
        <path d="M392.500 336.500H752" />
        <path d="M184 432.500H257" />
        <path d="M448.500 64.500H536" />
      </svg>

      <Callout className="left-[535px] top-[23px]"><Fit w={95}>Show/hide</Fit><Fit w={58}>button</Fit></Callout>
      <Callout className="left-[55px] top-[135px]"><Fit w={118}>Non-breaking</Fit><Fit w={49}>space</Fit></Callout>
      <Callout className="left-[751px] top-[295px]"><Fit w={89}>Paragraph</Fit><Fit w={56}>return</Fit></Callout>
      <Callout className="left-[23px] top-[375px]"><Fit w={29}>Tab</Fit></Callout>
    </div>
  );
}
